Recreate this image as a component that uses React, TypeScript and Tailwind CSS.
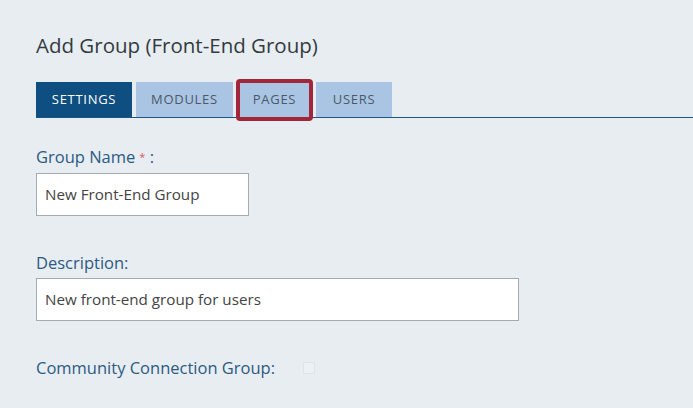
const tabs = ["SETTINGS", "MODULES", "PAGES", "USERS"];

const App = () => {
  return (
    <div
      className="w-[693px] h-[408px] overflow-hidden bg-[#e8edf2] pl-[36px]"
      style={{ fontFamily: '"Open Sans", "Noto Sans", sans-serif' }}
    >
      {/* Header */}
      <h1 className="pt-[30px] text-[20.5px] leading-[30px] font-normal text-[#333a40]">
        Add Group (Front-End Group)
      </h1>

      {/* Tabs */}
      <div className="mt-[22px] flex gap-[4px] border-b border-[#1d5584]">
        {tabs.map((tab, i) => (
          <div
            key={tab}
            className={`relative h-[35px] flex items-center justify-center text-[13px] tracking-[0.7px] ${
              i === 0
                ? "w-[96px] bg-[#0e4e80] text-white"
                : "bg-[#a9c5e3] text-[#4b5967]"
            } ${i === 1 ? "w-[97px]" : ""} ${i === 2 ? "w-[75px]" : ""} ${i === 3 ? "w-[76px]" : ""}`}
          >
            {tab}
            {tab === "PAGES" && (
              <div className="absolute left-[-1px] right-[-1px] top-[-3px] bottom-[-4px] rounded-[4px] border-[4px] border-[#a32638]" />
            )}
          </div>
        ))}
      </div>

      {/* Group name */}
      <div className="mt-[28px] text-[16.5px] leading-[22px] text-[#2c5a82]">
        Group Name<span className="ml-[4px] text-[11px] align-top text-[#d25a5a]">*</span> :
      </div>
      <div className="mt-[5px] w-[213px] h-[43px] bg-white border border-[#a3abb3] flex items-center px-[8px] text-[15.2px] text-[#444]">
        New Front-End Group
      </div>

      {/* Description */}
      <div className="mt-[36px] text-[16.5px] leading-[22px] text-[#2c5a82]">Description:</div>
      <div className="mt-[4px] w-[483px] h-[43px] bg-white border border-[#a3abb3] flex items-center px-[8px] text-[15.2px] text-[#444]">
        New front-end group for users
      </div>

      {/* Community connection */}
      <div className="mt-[36px] flex items-center text-[16.5px] leading-[22px] text-[#2c5a82]">
        <span>Community Connection Group:</span>
        <span className="ml-[28px] w-[12px] h-[12px] border border-[#dfe3e7] bg-[#eef1f4] rounded-[2px]" />
      </div>
    </div>
  );
};

export default App;
